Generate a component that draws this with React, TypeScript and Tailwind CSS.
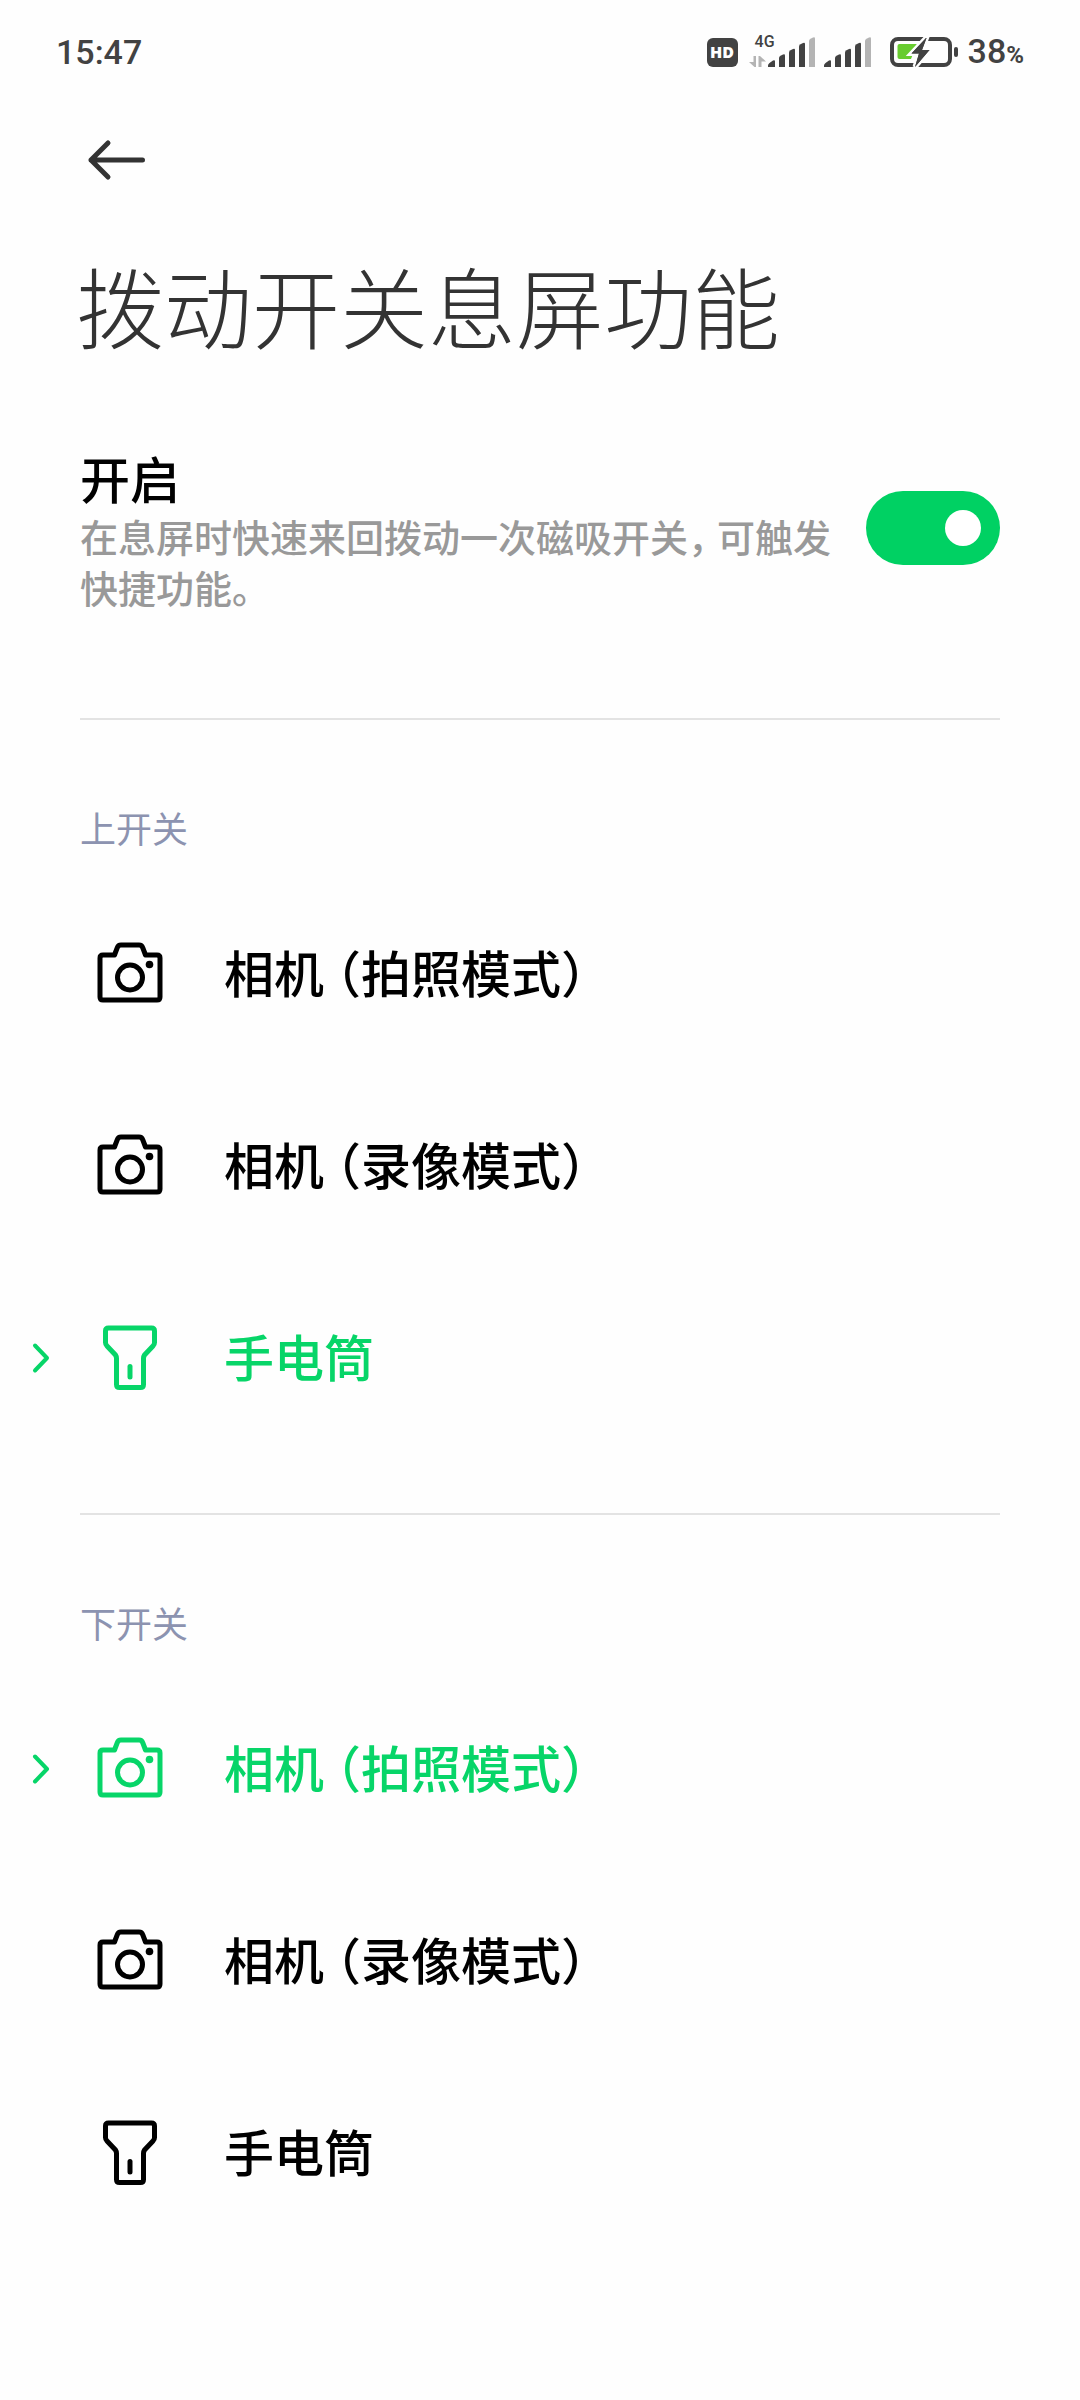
import React, { useState } from "react";

type IconName = "camera" | "torch";
type Option = { id: string; icon: IconName; label: React.ReactNode };

function CameraIcon() {
  return (
    <svg className="size-[72px] shrink-0" viewBox="0 0 72 72" fill="none" stroke="currentColor" strokeWidth="5" strokeLinejoin="round" aria-hidden="true">
      <path d="M9 17H20.500L23.200 9.800Q24.200 7 27 7H45Q47.800 7 48.800 9.800L51.500 17H63Q66 17 66 20V59Q66 62 63 62H9Q6 62 6 59V20Q6 17 9 17Z" />
      <circle cx="36" cy="39.500" r="12.500" />
      <circle cx="55.500" cy="26.500" r="3.800" fill="currentColor" stroke="none" />
    </svg>
  );
}

function TorchIcon() {
  return (
    <svg className="size-[72px] shrink-0" viewBox="0 0 72 72" fill="none" stroke="currentColor" strokeWidth="5" strokeLinejoin="round" strokeLinecap="round" aria-hidden="true">
      <path d="M14.500 6H57.500Q60.500 6 60.500 9V20.500Q60.500 22.500 59 24L50.500 33Q49.500 34.500 49.500 36.500V62.500Q49.500 65.500 46.500 65.500H25.500Q22.500 65.500 22.500 62.500V36.500Q22.500 34.500 21.500 33L13 24Q11.500 22.500 11.500 20.500V9Q11.500 6 14.500 6Z" />
      <path d="M36 44.500V55" />
    </svg>
  );
}

function CameraLabel({ mode }: { mode: string }) {
  return (
    <>
      相机<span className="ml-3 [font-feature-settings:'halt']">（</span>{mode}
      <span className="[font-feature-settings:'halt']">）</span>
    </>
  );
}

const options: Option[] = [
  { id: "photo", icon: "camera", label: <CameraLabel mode="拍照模式" /> },
  { id: "video", icon: "camera", label: <CameraLabel mode="录像模式" /> },
  { id: "torch", icon: "torch", label: "手电筒" },
];

function OptionGroup({ title, name, initial }: { title: string; name: string; initial: string }) {
  const [value, setValue] = useState(initial);
  return (
    <section aria-label={title} className="pb-[59px]">
      <hr className="mx-20 border-t-2 border-[#e3e3e3]" />
      <h2 className="mt-20 mb-6 px-20 text-4xl leading-[54px] font-normal text-[#8c93b0]">{title}</h2>
      {options.map((o) => {
        const on = value === o.id;
        return (
          <label key={o.id} className={on ? "flex h-48 cursor-pointer items-center text-[#07d568]" : "flex h-48 cursor-pointer items-center text-black"}>
            <input type="radio" name={name} checked={on} onChange={() => setValue(o.id)} className="sr-only" />
            <span className="flex w-[94px] shrink-0 pl-8">
              {on && (
                <svg className="h-8 w-5" viewBox="0 0 20 32" fill="none" stroke="currentColor" strokeWidth="4" strokeLinecap="round" strokeLinejoin="round" aria-hidden="true">
                  <path d="M3 3.500L15 16L3 28.500" />
                </svg>
              )}
            </span>
            {o.icon === "camera" ? <CameraIcon /> : <TorchIcon />}
            <span className="mb-1.5 ml-[58px] text-[50px] leading-[64px] font-medium whitespace-nowrap">{o.label}</span>
          </label>
        );
      })}
    </section>
  );
}

function SignalBars() {
  return (
    <svg className="h-8 w-12" viewBox="0 0 48 32" aria-hidden="true">
      <g fill="#424242">
        <path d="M0 29.500Q0 28 1.500 27L5 24.600Q7 23.600 7 25.500V31H0Z" />
        <path d="M11 22Q11 20.500 12.500 19.700L15 18.500Q17 17.600 17 19.500V31H11Z" />
        <path d="M21 16.500Q21 15 22.500 14.200L25 13Q27 12.100 27 14V31H21Z" />
        <path d="M31 10.500Q31 9 32.500 8.200L35 7Q37 6.100 37 8V31H31Z" />
      </g>
      <path fill="#b4b4b4" d="M41 5Q41 3.500 42.500 2.700L45 1.500Q47 .6 47 2.500V31H41Z" />
    </svg>
  );
}

function StatusBar() {
  return (
    <header className="flex h-[104px] items-center pr-14 pl-14 font-['Roboto','Noto_Sans_CJK_SC',sans-serif] font-medium text-[#424242]">
      <time className="text-[34px] leading-10">15:47</time>
      <div className="ml-auto flex items-center">
        <span className="flex h-[29px] w-[31px] items-center justify-center rounded-md bg-[#424242] font-['Open_Sans',sans-serif] text-base leading-none font-extrabold text-white">HD</span>
        <span className="relative ml-[11px] flex">
          <span className="absolute -top-0.5 left-1.5 text-base leading-none">4G</span>
          <svg className="h-8 w-[19px]" viewBox="0 0 19 32" fill="#b4b4b4" aria-hidden="true">
            <path d="M4.500 20H7V31H5.500L0 26H4.500ZM9.500 31V20H11L17 25.500H12.500V31Z" />
          </svg>
          <SignalBars />
        </span>
        <span className="ml-2 flex">
          <SignalBars />
        </span>
        <svg className="ml-[18px] h-8 w-[68px]" viewBox="0 0 68 32" aria-hidden="true">
          <rect x="2" y="3" width="58" height="26" rx="6" fill="none" stroke="#424242" strokeWidth="4" />
          <path d="M9.500 8H27L21 23H9.500Q7.500 23 7.500 21V10Q7.500 8 9.500 8Z" fill="#68cc2f" />
          <path d="M36 2L21.500 17.500H29L25 31L39.500 14H32L36.500 2Z" fill="#424242" stroke="#fefefe" strokeWidth="5" paintOrder="stroke" />
          <path d="M36 2L21.500 17.500H29L25 31L39.500 14H32L36.500 2Z" fill="#424242" />
          <rect x="64" y="11" width="4" height="10" rx="2" fill="#424242" />
        </svg>
        <span className="mt-0.5 ml-2.5 flex items-baseline">
          <span className="text-[34px] leading-10">38</span>
          <span className="text-2xl leading-10 font-bold">%</span>
        </span>
      </div>
    </header>
  );
}

export default function App() {
  const [enabled, setEnabled] = useState(true);
  return (
    <div lang="zh-CN" className="min-h-screen bg-[#fefefe] font-['Noto_Sans_CJK_SC',sans-serif] text-black">
      <StatusBar />
      <nav className="flex h-28 items-center px-[84px]">
        <button type="button" aria-label="返回" className="flex cursor-pointer">
          <svg className="h-12 w-16" viewBox="0 0 64 48" fill="none" stroke="#333333" strokeWidth="5" strokeLinecap="round" strokeLinejoin="round" aria-hidden="true">
            <path d="M24 7L7 24L24 41M7 24H58.500" />
          </svg>
        </button>
      </nav>
      <main>
        <h1 className="mt-6 px-[76px] text-[88px] leading-[128px] font-light text-[#333333]">拨动开关息屏功能</h1>
        <div className="mt-[76px] mb-[106px] flex items-center justify-between gap-8 px-20">
          <label htmlFor="enable" className="flex-1">
            <span className="block text-[50px] leading-[66px] font-medium">开启</span>
            <span className="block text-[38px] leading-[51px] font-medium text-[#999999]">
              在息屏时快速来回拨动一次磁吸开关<span className="mr-2.5 [font-feature-settings:'halt']">，</span>可触发快捷功能。
            </span>
          </label>
          <input
            id="enable"
            type="checkbox"
            role="switch"
            checked={enabled}
            onChange={(e) => setEnabled(e.target.checked)}
            className="flex h-[74px] w-[134px] shrink-0 cursor-pointer appearance-none items-center justify-start rounded-full bg-[#d9d9d9] px-[19px] before:size-9 before:rounded-full before:bg-white checked:justify-end checked:bg-[#00d163]"
          />
        </div>
        <OptionGroup title="上开关" name="upper" initial="torch" />
        <OptionGroup title="下开关" name="lower" initial="photo" />
      </main>
    </div>
  );
}
